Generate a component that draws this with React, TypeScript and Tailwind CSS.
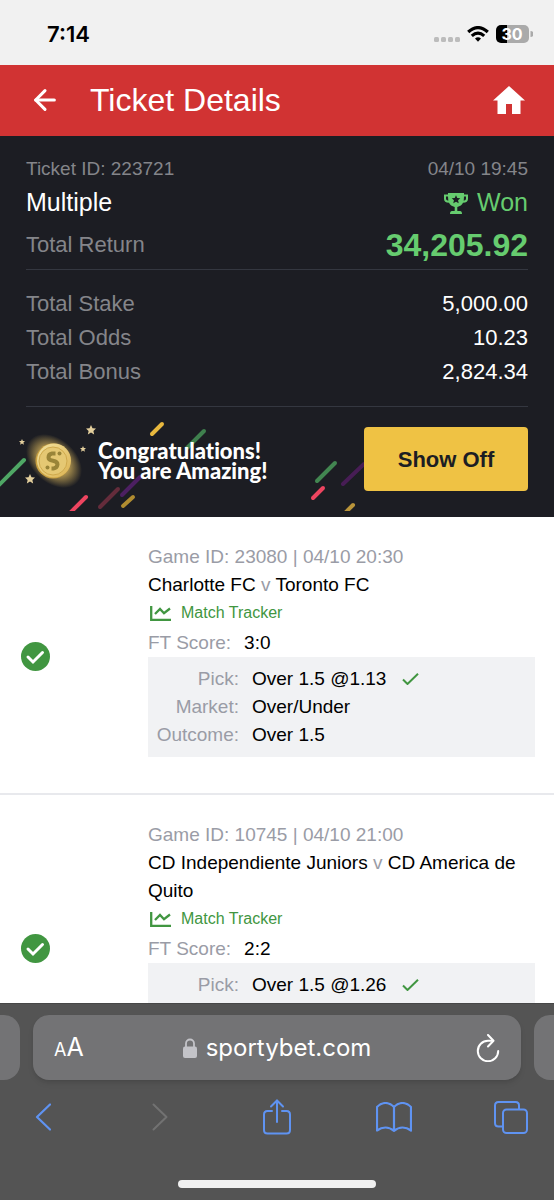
import { ArrowLeft } from 'lucide-react';

const totals = [
  { label: 'Total Stake', value: '5,000.00' },
  { label: 'Total Odds', value: '10.23' },
  { label: 'Total Bonus', value: '2,824.34' },
];

const games = [
  {
    id: '23080',
    time: '04/10 20:30',
    home: 'Charlotte FC',
    away: 'Toronto FC',
    score: '3:0',
    pick: 'Over 1.5 @1.13',
    market: 'Over/Under',
    outcome: 'Over 1.5',
  },
  {
    id: '10745',
    time: '04/10 21:00',
    home: 'CD Independiente Juniors',
    away: 'CD America de Quito',
    score: '2:2',
    pick: 'Over 1.5 @1.26',
    market: 'Over/Under',
    outcome: 'Over 1.5',
  },
];

const confetti = [
  { d: 'M-2 79L24 53', color: '#4fa765' },
  { d: 'M152 27L162 17', color: '#e8b83e' },
  { d: 'M86 90L69 107', color: '#ee4560' },
  { d: 'M118 82L100 100', color: '#642c3b' },
  { d: 'M140 70L122 88', color: '#4c1f62' },
  { d: 'M133 90L123 99', color: '#b08c30' },
  { d: 'M204 24L187 41', color: '#3f804e' },
  { d: 'M335 56L317 74', color: '#428651' },
  { d: 'M364 57L343 77', color: '#471d55' },
  { d: 'M323 81L313 91', color: '#ee4560' },
  { d: 'M353 98L344 107', color: '#b9943a' },
];

const stars = [
  'translate(91 23) scale(5)',
  'translate(22 35) scale(3)',
  'translate(83 42) scale(3)',
  'translate(30 72) scale(5)',
];

const STAR = 'M0-1L.3-.35 1-.3.48.18.63.9 0 .5-.63.9-.48.18-1-.3-.3-.35Z';

function StatusBar() {
  return (
    <div className="flex h-[65px] shrink-0 items-center justify-between bg-[#f1f1f1] pl-[47px] pr-[21px] pt-[3px] font-['Inter',sans-serif]">
      <span className="text-[22px] font-semibold leading-6 text-black">7:14</span>
      <div className="flex items-center gap-[7px]">
        <svg className="mt-[11px] h-[5px] w-[26px]" viewBox="0 0 26 5" fill="#bcbcbc">
          <rect width="5" height="5" rx="1.5" />
          <rect x="7" width="5" height="5" rx="1.5" />
          <rect x="14" width="5" height="5" rx="1.5" />
          <rect x="21" width="5" height="5" rx="1.5" />
        </svg>
        <svg className="h-4 w-[22px]" viewBox="0 0 22 16" fill="none" stroke="#000" strokeWidth="3.2">
          <path d="M1.2 6Q11-2.800 20.800 6" />
          <path d="M4.800 9.900Q11 4.400 17.200 9.900" />
          <path d="M8 12.600Q11 10 14 12.600L11 15.800Z" fill="#000" stroke="none" />
        </svg>
        <svg className="h-[18px] w-[37px]" viewBox="0 0 37 18">
          <path d="M5 0H12V18H5a5 5 0 0 1-5-5V5a5 5 0 0 1 5-5Z" fill="#000" />
          <path d="M11 0H28a5 5 0 0 1 5 5v8a5 5 0 0 1-5 5H11Z" fill="#aaa" />
          <path d="M34.500 6a3 3 0 0 1 0 6Z" fill="#aaa" />
          <text x="16" y="15" textAnchor="middle" fontSize="16" fontWeight="700" fill="#fff">
            30
          </text>
        </svg>
      </div>
    </div>
  );
}

function Header() {
  return (
    <header className="flex h-[71px] shrink-0 items-center bg-[#d13333] px-[29px] pb-0.5 text-white">
      <button aria-label="Back">
        <ArrowLeft className="h-8 w-8" strokeWidth={2.3} />
      </button>
      <h1 className="ml-[29px] flex-1 text-[32px] leading-10">Ticket Details</h1>
      <a href="#home" aria-label="Home">
        <svg className="h-7 w-8" viewBox="0 0 32 28" fill="#fff">
          <path d="M16 0L32 14.500H27.500V28H19V18H13V28H4.500V14.500H0Z" />
        </svg>
      </a>
    </header>
  );
}

function Trophy() {
  return (
    <svg className="h-[21px] w-6" viewBox="0 0 24 21">
      <path
        fillRule="evenodd"
        fill="#66cc6f"
        d="M4 0H20V1.500H24V6Q24 9.500 19 9.800Q17.500 13 13.300 14V18H16Q18 18 18 21H6Q6 18 8 18H10.700V14Q6.500 13 5 9.800Q0 9.500 0 6V1.500H4ZM2 3.500V6Q2 7.300 4.300 7.800L4 3.500ZM22 3.500H20L19.700 7.800Q22 7.300 22 6Z"
      />
      <path d={STAR} transform="translate(12 6.500) scale(4.300)" fill="#1c1d23" />
    </svg>
  );
}

function Summary() {
  return (
    <section className="px-[26px] text-[22px] text-[#84858a]">
      <div className="flex h-[34px] items-center justify-between text-[19px]">
        <span>Ticket ID: 223721</span>
        <span>04/10 19:45</span>
      </div>
      <div className="flex h-[34px] items-center justify-between text-[25px]">
        <span className="text-white">Multiple</span>
        <span className="flex items-center gap-[9px] text-[#66cc6f]">
          <Trophy />
          Won
        </span>
      </div>
      <div className="flex h-[50px] items-center justify-between border-b border-[#343740]">
        <span>Total Return</span>
        <span className="text-[32px] font-bold text-[#66cc6f]">34,205.92</span>
      </div>
      <div className="border-b border-[#343740] pb-[18px] pt-4">
        {totals.map((t) => (
          <div key={t.label} className="flex h-[34px] items-center justify-between">
            <span>{t.label}</span>
            <span className="text-white">{t.value}</span>
          </div>
        ))}
      </div>
    </section>
  );
}

function Banner() {
  return (
    <section className="relative flex items-center justify-between pb-[26px] pl-[98px] pr-[26px] pt-5">
      <svg className="absolute left-0 top-0 h-[104px] w-[364px]" viewBox="0 0 364 104">
        <defs>
          <radialGradient id="glow">
            <stop offset="0.5" stopColor="#d9b65c" stopOpacity="0.8" />
            <stop offset="1" stopColor="#d9b65c" stopOpacity="0" />
          </radialGradient>
          <linearGradient id="coin" x1="0" y1="0" x2="1" y2="1">
            <stop offset="0" stopColor="#f3e3a0" />
            <stop offset="1" stopColor="#dcb352" />
          </linearGradient>
        </defs>
        {confetti.map((c) => (
          <path key={c.d} d={c.d} stroke={c.color} strokeWidth="4" strokeLinecap="round" />
        ))}
        {stars.map((t) => (
          <path key={t} d={STAR} transform={t} fill="#e3cf9d" />
        ))}
        <ellipse cx="54" cy="54" rx="32" ry="22" fill="url(#glow)" transform="rotate(42 54 54)" />
        <circle cx="53" cy="54" r="17.500" fill="#c9a040" />
        <circle cx="54" cy="53.500" r="17" fill="url(#coin)" />
        <circle cx="53" cy="54" r="14" fill="#e5c873" stroke="#cfa94c" />
        <path
          d="M55.500 46.500H52Q48.500 47 48.500 50.500Q48.500 53 53 53.800Q57.500 54.500 57.500 57.500Q57 61 53.500 61.500H51.500"
          fill="none"
          stroke="#998438"
          strokeWidth="4"
        />
        <circle cx="59.500" cy="46.500" r="2" fill="#998438" />
        <circle cx="47.500" cy="60.500" r="2" fill="#998438" />
      </svg>
      <p className="relative mt-1 font-['Lato',sans-serif] text-[22px] font-black leading-5 text-white [font-variant-ligatures:none]">
        Congratulations!
        <br />
        You are Amazing!
      </p>
      <button className="relative h-16 w-[164px] rounded bg-[#efc244] text-[22px] font-bold text-[#1c1d23]">
        Show Off
      </button>
    </section>
  );
}

function Row({ label, children }: { label: string; children: React.ReactNode }) {
  return (
    <div className="flex h-7 items-center gap-[13px]">
      <dt className="w-[91px] text-right text-[#9a9ca6]">{label}:</dt>
      <dd className="flex items-center gap-4">{children}</dd>
    </div>
  );
}

function Game({ game }: { game: (typeof games)[number] }) {
  return (
    <li className="flex items-center border-b-2 border-[#e8e9ed] pb-9 pl-[21px] pr-[19px] pt-[26px]">
      {/* centred on the whole row, so the uneven padding is balanced here */}
      <svg className="mt-3 h-[29px] w-[29px] shrink-0" viewBox="0 0 29 29" fill="none">
        <circle cx="14.500" cy="14.500" r="14.500" fill="#419641" />
        <path d="M7 15L12 20L21.500 10.500" stroke="#fff" strokeWidth="3" strokeLinecap="round" />
      </svg>
      <div className="ml-[98px] flex-1 text-[19px] leading-7 text-black">
        <p className="text-[#9a9ca6]">
          Game ID: {game.id} | {game.time}
        </p>
        <p>
          {game.home} <span className="text-[#9a9ca6]">v</span> {game.away}
        </p>
        <a href="#tracker" className="flex h-7 items-center gap-[10px] pl-0.5 text-base text-[#419641]">
          <svg className="h-[15px] w-[21px]" viewBox="0 0 21 15" fill="none" stroke="#419641" strokeWidth="2.300">
            <path d="M1.200 0V13.800H21" />
            <path d="M5 8L10 3L14 7.200L20 2.500" />
          </svg>
          Match Tracker
        </a>
        <p className="flex h-[30px] items-center gap-[13px] pt-0.5">
          <span className="text-[#9a9ca6]">FT Score:</span>
          <span>{game.score}</span>
        </p>
        <dl className="bg-[#f1f2f4] py-2">
          <Row label="Pick">
            {game.pick}
            <svg className="h-3 w-[17px]" viewBox="0 0 17 12" fill="none" stroke="#419641" strokeWidth="2">
              <path d="M1 6.500L5.500 11L16 .8" />
            </svg>
          </Row>
          <Row label="Market">{game.market}</Row>
          <Row label="Outcome">{game.outcome}</Row>
        </dl>
      </div>
    </li>
  );
}

function BrowserBar() {
  return (
    <footer className="shrink-0 border-t border-[#474747] bg-[#545454] pb-3 pt-[11px] font-['Inter',sans-serif]">
      <div className="flex h-[65px] gap-[13px]">
        <div className="w-5 rounded-r-2xl bg-[#737375]" />
        <div className="flex flex-1 items-center rounded-2xl bg-[#737375] px-[21px] text-white shadow-md">
          <button aria-label="Text size" className="flex w-16 items-baseline pt-0.5">
            <span className="text-lg leading-8">A</span>
            <span className="text-[25px] leading-8">A</span>
          </button>
          <div className="flex flex-1 items-center justify-center gap-[9px] text-2xl">
            <svg className="h-5 w-[14px]" viewBox="0 0 14 20" fill="#c3c3c8">
              <rect y="8.500" width="14" height="11.500" rx="2" />
              <path d="M3 9V5.500a4 4 0 0 1 8 0V9" fill="none" stroke="#c3c3c8" strokeWidth="1.800" />
            </svg>
            sportybet.com
          </div>
          <button aria-label="Reload" className="flex w-16 justify-end">
            <svg className="h-7 w-6" viewBox="0 0 24 28" fill="none" stroke="#fff" strokeWidth="2" strokeLinecap="round">
              <path d="M16.500 6.800H12A10.200 10.200 0 1 0 22.200 17" />
              <path d="M12 1L17.500 6.800L12 12.500" strokeLinejoin="round" />
            </svg>
          </button>
        </div>
        <div className="w-5 rounded-l-2xl bg-[#737375]" />
      </div>
      <nav className="flex h-[74px] items-center justify-between px-[25px]">
        <button aria-label="Back" className="flex w-9 justify-center">
          <svg className="h-7 w-4" viewBox="0 0 16 28" fill="none" stroke="#5f93f2" strokeWidth="2.200" strokeLinecap="round">
            <path d="M15 1.500L2 14L15 26.500" strokeLinejoin="round" />
          </svg>
        </button>
        <button aria-label="Forward" className="flex w-9 justify-center">
          <svg className="h-7 w-4" viewBox="0 0 16 28" fill="none" stroke="#727272" strokeWidth="2" strokeLinecap="round">
            <path d="M1.500 1.500L14.500 14L1.500 26.500" strokeLinejoin="round" />
          </svg>
        </button>
        <button aria-label="Share" className="flex w-9 justify-center">
          <svg className="h-9 w-7" viewBox="0 0 28 36" fill="none" stroke="#5f93f2" strokeWidth="2" strokeLinecap="round">
            <path d="M9 12H4.500Q1 12 1 15.500V31Q1 34.500 4.500 34.500H23.500Q27 34.500 27 31V15.500Q27 12 23.500 12H19" />
            <path d="M14 23V1.500M8 7.500L14 1.500L20 7.500" />
          </svg>
        </button>
        <button aria-label="Bookmarks" className="flex w-9 justify-center">
          <svg className="h-[30px] w-9" viewBox="0 0 36 30" fill="none" stroke="#5f93f2" strokeWidth="2.200" strokeLinejoin="round">
            <path d="M18 5Q14 1 9.500 1T1 5V28.500Q5 25.500 9.500 25.500T18 28.800Q22 25.500 26.500 25.500T35 28.500V5Q31 1 26.500 1T18 5V28.500" />
          </svg>
        </button>
        <button aria-label="Tabs" className="flex w-9 justify-center">
          <svg className="h-[33px] w-[34px]" viewBox="0 0 34 33" fill="none" stroke="#5f93f2" strokeWidth="2">
            <rect x="9" y="8.500" width="24" height="23.500" rx="3.500" />
            <path d="M9 25.500H4.500Q1 25.500 1 22V4.500Q1 1 4.500 1H21.500Q25 1 25 4.500V8.500" />
          </svg>
        </button>
      </nav>
      <div className="mx-auto mt-[26px] h-2 w-[198px] rounded-full bg-[#f0f0f0]" />
    </footer>
  );
}

export default function App() {
  return (
    <div className="flex h-screen flex-col overflow-hidden bg-white font-['Liberation_Sans',sans-serif]">
      <StatusBar />
      <Header />
      <main className="min-h-0 flex-1 overflow-hidden">
        <div className="bg-[#1c1d23] pt-4">
          <Summary />
          <Banner />
        </div>
        <ul>
          {games.map((game) => (
            <Game key={game.id} game={game} />
          ))}
        </ul>
      </main>
      <BrowserBar />
    </div>
  );
}
